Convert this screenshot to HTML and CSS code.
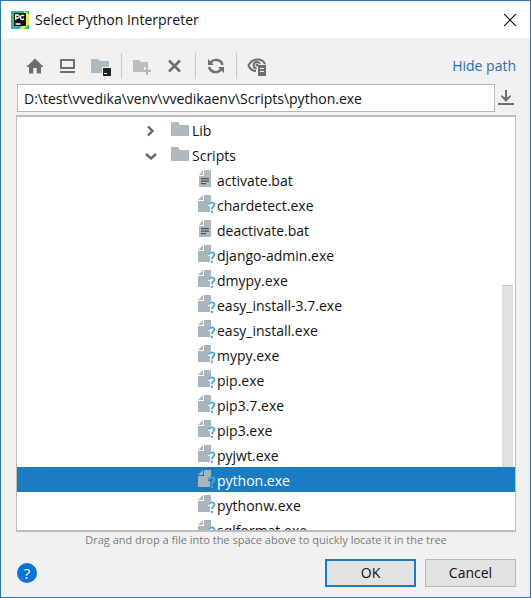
FILE: index.html
```html
<!DOCTYPE html>
<html lang="en">
<head>
<meta charset="utf-8">
<title>Select Python Interpreter</title>
<meta name="viewport" content="width=device-width, initial-scale=1">
<link rel="stylesheet" href="styles.css">
</head>
<body>
<svg class="defs" aria-hidden="true">
  <symbol id="folder" viewBox="0 0 18 14"><path fill="#afb9c0" d="M0 0h7l2 3h9v11H0z"/></symbol>
  <symbol id="script" viewBox="0 0 18 18">
    <path fill="#afb9c0" d="M6 0h7v17H1V6h5zM5 0v5H1z"/>
    <path fill="#4c5257" d="M3 8h8v1.300H3zM3 10.500h8v1.300H3zM3 13h5v1.300H3z"/>
  </symbol>
  <symbol id="unknown" viewBox="0 0 18 18">
    <path fill="#a9b5bc" d="M6 0h7v6l-3 2v3h2v6H0V6h6zM5 0v5H0z"/>
    <path fill="none" stroke="#4fa9d6" stroke-width="1.900" d="M10.800 9.800C11 6.600 16.500 6.600 16.500 9.600C16.500 11.600 13.800 11.600 13.800 14.300"/>
    <path fill="#4fa9d6" d="M12.800 15.700h2V18h-2z"/>
  </symbol>
</svg>
<main class="dialog">
  <header class="titlebar">
    <svg class="logo" viewBox="0 0 18 18" aria-hidden="true">
      <path fill="#21c27d" d="M0 0h18v18H0z"/>
      <path fill="#e9ee50" d="M13 0l5 3v10l-5 5H8l5-5z"/>
      <path fill="#18b8c9" d="M0 10l8 8H2l-2-2z"/>
      <path fill="#101414" d="M3 2h12v13H3z"/>
      <path fill="none" stroke="#fff" stroke-width="1.300" d="M4.700 9V4H6.500C8.800 4 8.800 7 6.500 7H4.700M13 5C11.500 3.300 9.500 4.300 9.500 6.400S11.500 9.500 13 7.800M4.500 13h5"/>
    </svg>
    <h1 class="title">Select Python Interpreter</h1>
    <button class="icon-button close" type="button" aria-label="Close">
      <svg width="12" height="12" viewBox="0 0 12 12"><path fill="none" stroke="#111" stroke-width="1.200" d="M0 0l12 12M12 0L0 12"/></svg>
    </button>
  </header>
  <div class="content">
    <div class="toolbar">
      <button class="icon-button tool" type="button" aria-label="Home">
        <svg width="20" height="20" viewBox="0 0 20 20"><path fill="#6e6e6e" d="M10 2.500L18.800 11H16v6.500h-4.300V12H8.300v5.500H4V11H1.200z"/></svg>
      </button>
      <button class="icon-button tool" type="button" aria-label="Desktop">
        <svg width="20" height="20" viewBox="0 0 20 20"><path fill="none" stroke="#6e6e6e" stroke-width="2" d="M3 4h13v8H3zM2 16h15"/></svg>
      </button>
      <button class="icon-button tool" type="button" aria-label="Project directory">
        <svg width="20" height="20" viewBox="0 0 20 20"><path fill="#afb9c0" d="M0 3h7l2 2h9v6h-7v6H0z"/><path fill="#231f20" d="M12 12h8v8h-8z"/><path fill="#eee" d="M13 17h3v1h-3z"/></svg>
      </button>
      <span class="separator"></span>
      <button class="icon-button tool" type="button" aria-label="New folder" disabled>
        <svg width="20" height="20" viewBox="0 0 20 20"><path fill="#bdbdbd" d="M1 4h6l2 2h7v5h-4v3h-1v2H1z"/><path fill="none" stroke="#b5b5b5" stroke-width="2" d="M15 11v8M11 15h8"/></svg>
      </button>
      <button class="icon-button tool" type="button" aria-label="Delete">
        <svg width="20" height="20" viewBox="0 0 20 20"><path fill="none" stroke="#6e6e6e" stroke-width="2.500" d="M4 4.500l11 11M15 4.500l-11 11"/></svg>
      </button>
      <span class="separator"></span>
      <button class="icon-button tool" type="button" aria-label="Refresh">
        <svg width="20" height="20" viewBox="0 0 20 20"><path fill="none" stroke="#6e6e6e" stroke-width="2.400" d="M4.500 6.500C8 2.500 15 3 16.500 9M15 13.500C12 17.500 5 17 3 11"/><path fill="#6e6e6e" d="M2 3v6h6zM18 17v-6h-6z"/></svg>
      </button>
      <span class="separator"></span>
      <button class="icon-button tool" type="button" aria-label="Show hidden files">
        <svg width="20" height="20" viewBox="0 0 20 20"><path fill="none" stroke="#6e6e6e" stroke-width="2" d="M9 15C6 15 3 13 1.500 9.500C5 1.800 15 1.800 18 8M9.500 12.500A3.300 3.300 0 1 1 13 8"/><circle cx="10" cy="9" r="1.500" fill="#6e6e6e"/><path fill="#6e6e6e" d="M11 9h8v11h-8z"/><path fill="#f2f2f2" d="M13 12h4v1h-4zM13 15h4v1h-4z"/></svg>
      </button>
      <a class="path-link" href="#path">Hide path</a>
    </div>
    <div class="path-row">
      <input class="path" id="path" type="text" aria-label="Path" value="D:\test\vvedika\venv\vvedikaenv\Scripts\python.exe">
      <button class="icon-button history" type="button" aria-label="Path history">
        <svg width="16" height="16" viewBox="0 0 16 16"><path fill="none" stroke="#6e6e6e" stroke-width="2" d="M8 0v8M0 14h16"/><path fill="#6e6e6e" d="M3 5l5 3 5-3v1.500L8 12 3 6.500z"/></svg>
      </button>
    </div>
    <div class="tree-box">
      <ul class="tree">
        <li class="row folder"><button class="icon-button" type="button" aria-label="Expand Lib"><svg width="12" height="12" viewBox="0 0 12 12"><path fill="none" stroke="#666" stroke-width="2.400" d="M3 1.500l4.500 4.500L3 10.500"/></svg></button><svg class="folder-icon"><use href="#folder"/></svg>Lib</li>
        <li class="row folder"><button class="icon-button" type="button" aria-label="Collapse Scripts"><svg width="12" height="12" viewBox="0 0 12 12"><path fill="none" stroke="#666" stroke-width="2.400" d="M1 4l5 4.500L11 4"/></svg></button><svg class="folder-icon"><use href="#folder"/></svg>Scripts</li>
        <li class="row file"><svg class="file-icon"><use href="#script"/></svg>activate.bat</li>
        <li class="row file"><svg class="file-icon"><use href="#unknown"/></svg>chardetect.exe</li>
        <li class="row file"><svg class="file-icon"><use href="#script"/></svg>deactivate.bat</li>
        <li class="row file"><svg class="file-icon"><use href="#unknown"/></svg>django-admin.exe</li>
        <li class="row file"><svg class="file-icon"><use href="#unknown"/></svg>dmypy.exe</li>
        <li class="row file"><svg class="file-icon"><use href="#unknown"/></svg>easy_install-3.7.exe</li>
        <li class="row file"><svg class="file-icon"><use href="#unknown"/></svg>easy_install.exe</li>
        <li class="row file"><svg class="file-icon"><use href="#unknown"/></svg>mypy.exe</li>
        <li class="row file"><svg class="file-icon"><use href="#unknown"/></svg>pip.exe</li>
        <li class="row file"><svg class="file-icon"><use href="#unknown"/></svg>pip3.7.exe</li>
        <li class="row file"><svg class="file-icon"><use href="#unknown"/></svg>pip3.exe</li>
        <li class="row file"><svg class="file-icon"><use href="#unknown"/></svg>pyjwt.exe</li>
        <li class="row file selected"><svg class="file-icon"><use href="#unknown"/></svg>python.exe</li>
        <li class="row file"><svg class="file-icon"><use href="#unknown"/></svg>pythonw.exe</li>
        <li class="row file"><svg class="file-icon"><use href="#unknown"/></svg>sqlformat.exe</li>
      </ul>
      <div class="thumb"></div>
    </div>
    <p class="hint">Drag and drop a file into the space above to quickly locate it in the tree</p>
    <footer class="actions">
      <button class="help" type="button" aria-label="Help">?</button>
      <button class="button primary" type="button">OK</button>
      <button class="button" type="button">Cancel</button>
    </footer>
  </div>
</main>
</body>
</html>
```
FILE: styles.css
```css
* { box-sizing: border-box; }
body {
  margin: 0;
  font: 14px/24px "Open Sans", "Noto Sans", sans-serif;
  color: #111;
}
.defs { display: none; }
svg { display: block; flex: none; }
.dialog {
  display: flex;
  flex-direction: column;
  height: 100vh;
  border: 1px solid #2f74b5;
  background: #f1f1f1;
}
.titlebar {
  display: flex;
  align-items: center;
  height: 37px;
  padding: 0 14px 0 10px;
  background: #fff;
}
.logo { width: 18px; height: 18px; }
.title { margin: 0 auto 0 6px; font-size: 14px; font-weight: 400; }
.icon-button { padding: 0; border: 0; background: none; }
.content {
  flex: 1;
  min-height: 0;
  display: flex;
  flex-direction: column;
  padding: 15px 14px 10px 15px;
}
.toolbar { display: flex; align-items: center; height: 26px; padding-left: 9px; }
.tool { width: 20px; margin-right: 13px; }
.separator { width: 1px; height: 26px; margin: 0 10px 0 -3px; background: #c9c9c9; }
.path-link { margin-left: auto; color: #2470b3; text-decoration: none; }
.path-row { display: flex; gap: 3px; margin-top: 5px; padding-left: 1px; }
.path {
  flex: 1;
  min-width: 0;
  height: 28px;
  padding: 0 6px;
  border: 1px solid #b9b9b9;
  background: #fff;
  color: inherit;
  font: inherit;
}
.history { width: 18px; }
.tree-box {
  position: relative;
  flex: 1;
  min-height: 0;
  margin-top: 3px;
  overflow: hidden;
  border: solid #bdbdbd;
  border-width: 2px 1px;
  background: #fff;
}
.tree { margin: 0; padding: 0; list-style: none; }
.row { display: flex; align-items: center; height: 25px; padding-top: 2px; }
.folder { padding-left: 128px; }
.folder-icon { width: 18px; height: 14px; margin: 0 3px 4px 14px; }
.file { padding-left: 181px; }
.file-icon { width: 18px; height: 18px; margin: 0 1px 4px 0; }
.selected { position: relative; z-index: 1; background: #1a7dc4; color: #fff; }
.thumb {
  position: absolute;
  top: 168px;
  right: 2px;
  width: 11px;
  height: 182px;
  border-top: 1px solid #c9c9c9;
  background: #e0e0e0;
}
.hint { margin: 0; font-size: 11px; line-height: 16px; text-align: center; color: #7a7a7a; }
.actions { display: flex; align-items: center; gap: 9px; margin-top: 11px; }
.help {
  width: 20px;
  height: 20px;
  margin: 0 auto 0 1px;
  padding: 0;
  border: 0;
  border-radius: 50%;
  background: #0873d9;
  color: #fff;
  font: 15px/20px "Open Sans", sans-serif;
}
.button {
  width: 91px;
  height: 28px;
  padding: 0;
  border: 1px solid #b8b8b8;
  background: #e2e2e2;
  color: inherit;
  font: inherit;
}
.primary { border: 2px solid #1a7dc4; }
```
